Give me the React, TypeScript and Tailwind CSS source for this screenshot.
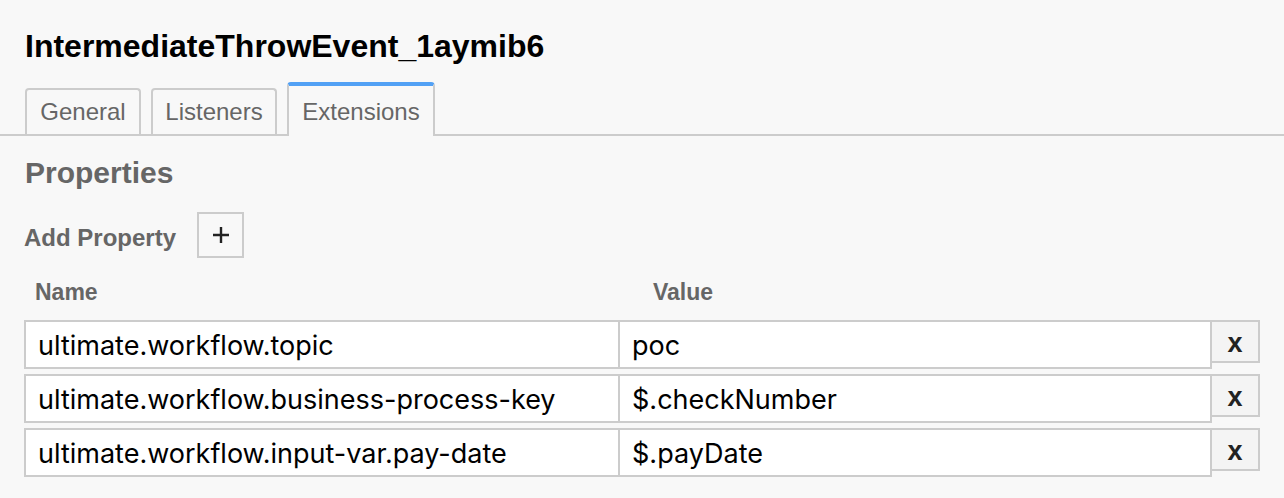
import React from 'react';

type Prop = { name: string; value: string };

const properties: Prop[] = [
  { name: 'ultimate.workflow.topic', value: 'poc' },
  { name: 'ultimate.workflow.business-process-key', value: '$.checkNumber' },
  { name: 'ultimate.workflow.input-var.pay-date', value: '$.payDate' },
];

const tabs = [
  { label: 'General', width: 'w-[116px]' },
  { label: 'Listeners', width: 'w-[126px]' },
  { label: 'Extensions', width: 'w-[148px]', active: true },
];

const PropertyRow: React.FC<{ prop: Prop }> = ({ prop }) => (
  <div className="flex items-start">
    <div className="w-[597px] h-[49px] flex items-center px-[12px] pt-[3px] bg-white border-2 border-[#ccc] text-[27px] text-black font-['Inter',sans-serif] whitespace-nowrap overflow-hidden">
      {prop.name}
    </div>
    <div className="-ml-[2px] w-[595px] h-[49px] flex items-center px-[12px] pt-[3px] bg-white border-2 border-[#ccc] text-[27px] text-black font-['Inter',sans-serif] whitespace-nowrap overflow-hidden">
      {prop.value}
    </div>
    <button className="-ml-[2px] w-[50px] h-[43px] flex items-center justify-center border-2 border-[#ccc] bg-[#f4f4f4] text-[27px] font-bold text-[#222] leading-[27px] pt-[4px]">
      x
    </button>
  </div>
);

const App: React.FC = () => {
  return (
    <div className="w-full h-[498px] overflow-hidden bg-[#f8f8f8] font-['Liberation_Sans',Arial,sans-serif]">
      <h1 className="pl-[25px] pt-[30px] text-[32px] leading-[32px] font-bold text-black">
        IntermediateThrowEvent_1aymib6
      </h1>

      {/* tabs */}
      <div className="mt-[22px] flex items-end gap-[10px] pl-[25px] border-b-2 border-[#ccc] h-[52px]">
        {tabs.map((tab) =>
          tab.active ? (
            <div
              key={tab.label}
              className={`${tab.width} h-[54px] -mb-[2px] rounded-t-[4px] border-2 border-b-0 border-[#ccc] border-t-4 border-t-[#52a1f5] bg-[#f8f8f8] pt-[14px] text-center text-[24px] leading-[24px] text-[#666]`}
            >
              {tab.label}
            </div>
          ) : (
            <div
              key={tab.label}
              className={`${tab.width} h-[46px] rounded-t-[4px] border-2 border-b-0 border-[#ccc] pt-[10px] text-center text-[24px] leading-[24px] text-[#666]`}
            >
              {tab.label}
            </div>
          )
        )}
      </div>

      <div className="px-[24px]">
        <h2 className="mt-[22px] pl-[1px] text-[30px] leading-[30px] font-bold text-[#666]">Properties</h2>

        <div className="mt-[24px] flex items-start">
          <span className="mt-[14px] text-[24px] leading-[24px] font-bold text-[#666]">Add Property</span>
          <button className="ml-[21px] w-[47px] h-[46px] flex items-center justify-center border-2 border-[#ccc]">
            <svg width="18" height="18" viewBox="0 0 18 18">
              <path d="M9 1v16M1 9h16" stroke="#222" strokeWidth="2.4" />
            </svg>
          </button>
        </div>

        <div className="mt-[23px] flex text-[23px] leading-[23px] font-bold text-[#666]">
          <span className="pl-[11px] w-[629px]">Name</span>
          <span>Value</span>
        </div>

        <div className="mt-[16px] flex flex-col gap-[5px]">
          {properties.map((p) => (
            <PropertyRow key={p.name} prop={p} />
          ))}
        </div>
      </div>
    </div>
  );
};

export default App;
